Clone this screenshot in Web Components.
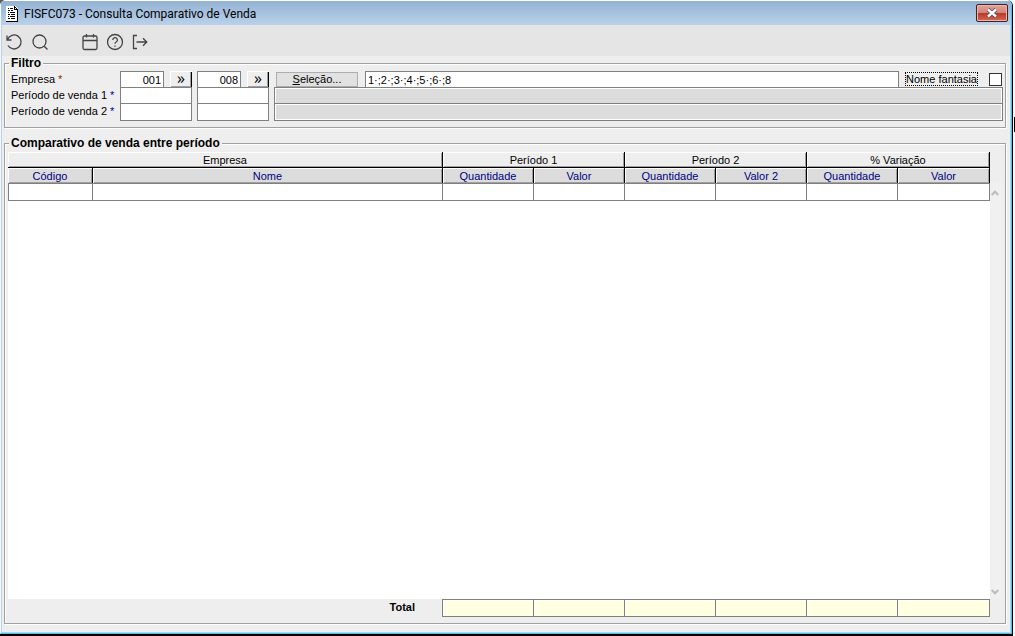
<!DOCTYPE html>
<html lang="pt-BR">
<head>
<meta charset="utf-8">
<title>FISFC073 - Consulta Comparativo de Venda</title>
<style>
html, body { margin: 0; height: 100%; }
body { background: #f4f8fc; font: 11px/14px "Liberation Sans", Arial, sans-serif; color: #000; }
</style>
</head>
<body>
<app-window heading="FISFC073 - Consulta Comparativo de Venda">
  <tool-bar slot="tools">
    <tool-button icon="undo" label="Desfazer"></tool-button>
    <tool-button icon="search" label="Pesquisar"></tool-button>
    <tool-button icon="calendar" label="Calendário" class="apart"></tool-button>
    <tool-button icon="help" label="Ajuda"></tool-button>
    <tool-button icon="exit" label="Sair"></tool-button>
  </tool-bar>
  <field-group heading="Filtro"><sales-filter></sales-filter></field-group>
  <field-group heading="Comparativo de venda entre período" class="grow"><sales-grid></sales-grid></field-group>
</app-window>

<template id="window-tpl">
<style>
:host { display: block; box-sizing: border-box; min-height: 100vh; padding-right: 2px; background: linear-gradient(#5a5a5a, #5a5a5a) 0 0 / 8px 8px no-repeat, linear-gradient(#000, #000) right 117px / 1px 15px no-repeat, #f4f8fc; }
.frame { box-sizing: border-box; min-height: 100vh; display: flex; flex-direction: column; border-right: 1px solid #000; border-bottom: 2px solid #000; border-radius: 6px 6px 0 0; overflow: hidden; background: #eee; }
.inner { flex: 1; display: flex; flex-direction: column; border-left: 1px solid #f4f8fc; border-right: 1px solid #3fc8ee; border-bottom: 1px solid #3fc8ee; }
.body { flex: 1; display: flex; flex-direction: column; border: solid #b9d1ea; border-width: 0 1px 1px; }
header { height: 25px; display: flex; align-items: center; gap: 6px; padding: 0 3px 0 5px; box-sizing: border-box; background: linear-gradient(#fff 0 1px, #94b2d0 1px, #a6c1df 50%, #b9d1ea); }
h1 { margin: 0; flex: 1; font: 12px/16px Roboto, "Open Sans", sans-serif; padding-top: 3px; }
.doc { width: 12px; height: 16px; margin-top: 2px; }
.close { width: 32px; height: 18px; padding: 0; border: 1px solid #4b1a22; border-radius: 2px; background: linear-gradient(#e3a49a, #d4857a 48%, #b93a25 52%, #cf6a55); box-shadow: inset 0 0 0 1px #e9b9b0; display: grid; place-items: center; }
main { flex: 1; display: flex; flex-direction: column; gap: 8px; padding: 0 4px 8px 2px; }
::slotted(.grow) { flex: 1; }
</style>
<div class="frame"><div class="inner">
  <header>
    <svg class="doc" viewBox="0 0 12 16" shape-rendering="crispEdges" aria-hidden="true"><path d="M0 0h9l3 3v13H0z" fill="#fff"/><path d="M0 15h12v1H0zM11 4h1v12h-1zM8 0h1v4H8zM9 1h1v1H9zM10 2h1v1h-1zM8 3h4v1H8zM2 2h1v1H2zM4 2h3v1H4zM2 4h2v1H2zM5 4h2v1H5zM2 6h1v1H2zM4 6h5v1H4zM2 8h2v1H2zM5 8h4v1H5zM2 10h1v1H2zM4 10h5v1H4zM2 12h2v1H2zM5 12h4v1H5z"/></svg>
    <h1></h1>
    <button class="close" aria-label="Fechar"><svg width="14" height="10" viewBox="0 0 14 10"><path d="M3 1.500l8 7M11 1.500l-8 7" stroke="#5a4650" stroke-width="4.200"/><path d="M3 1.500l8 7M11 1.500l-8 7" stroke="#fff" stroke-width="2.400"/></svg></button>
  </header>
  <div class="body"><slot name="tools"></slot><main><slot></slot></main></div>
</div></div>
</template>

<template id="group-tpl">
<style>
:host { display: flex; flex-direction: column; }
.box { flex: 1; display: flex; flex-direction: column; margin-top: 7px; padding: 0 2px 6px 3px; border: 1px solid #a0a0a0; box-shadow: inset 1px 1px #fff, 1px 1px #fff; }
.title { align-self: flex-start; margin: -8px 0 1px 1px; padding: 0 2px; background: #eee; font-size: 12px; font-weight: bold; line-height: 14px; }
::slotted(*) { flex: 1; }
</style>
<div class="box" role="group" aria-labelledby="t"><div class="title" id="t"></div><slot></slot></div>
</template>

<template id="filter-tpl">
<style>
:host { display: block; }
* { box-sizing: border-box; }
.grid { display: grid; grid-template-columns: 107px 72px 72px minmax(0, 1fr); grid-auto-rows: 16px; column-gap: 5px; padding-bottom: 2px; }
.name { padding-left: 3px; line-height: 16px; white-space: nowrap; }
i { font-style: normal; color: #0000a0; }
i.must { color: #803000; }
input { font: inherit; color: inherit; margin: 0; border-radius: 0; outline: 0; }
input:not([type=checkbox]) { width: 100%; height: 18px; border: 1px solid #808080; background: #fff; padding: 0 2px; }
input.off { background: #dcdcdc !important; box-shadow: inset 1px 1px #fff, inset -1px -1px #fff; }
.code { display: flex; justify-content: space-between; }
.code input { width: 44px !important; text-align: right; }
.code button { width: 22px; height: 16px; padding: 0 0 3px; border: 0; background: #eee; box-shadow: inset 1px 1px #fff, inset -1px 0 #000, inset -2px -1px #a0a0a0; font: 16px/12px "Open Sans", sans-serif; color: #000; }
.pick { display: flex; align-items: flex-start; padding: 0 1px 0 2px; }
.pick > button { width: 82px; height: 15px; margin: 1px 7px 0 0; padding: 0; border: 1px solid #adadad; background: #e1e1e1; font: inherit; line-height: 13px; color: #000; }
.pick input.list { flex: 1; width: auto; min-width: 0; }
.pick label { margin: 1px 11px 0 6px; height: 14px; line-height: 12px; border: 1px dotted #000; white-space: nowrap; }
input[type=checkbox] { appearance: none; width: 13px; height: 13px; margin-top: 2px; border: 1px solid #333; background: #fff; }
input[type=checkbox]:checked { background: #333; }
</style>
<div class="grid">
  <label class="name" for="e1">Empresa <i class="must">*</i></label>
  <div class="code"><input id="e1" value="001"><button aria-label="Buscar empresa inicial">»</button></div>
  <div class="code"><input aria-label="Empresa final" value="008"><button aria-label="Buscar empresa final">»</button></div>
  <div class="pick"><button><u>S</u>eleção...</button><input class="list" aria-label="Empresas selecionadas" value="1·;2·;3·;4·;5·;6·;8"><label for="nf">Nome fantasia</label><input type="checkbox" id="nf"></div>
  <label class="name" for="p1">Período de venda 1 <i>*</i></label>
  <input id="p1"><input aria-label="Fim do período 1"><input class="off" readonly aria-label="Descrição do período 1">
  <label class="name" for="p2">Período de venda 2 <i>*</i></label>
  <input id="p2"><input aria-label="Fim do período 2"><input class="off" readonly aria-label="Descrição do período 2">
</div>
</template>

<template id="grid-tpl">
<style>
:host { display: flex; flex-direction: column; padding-top: 1px; }
* { box-sizing: border-box; }
.area { flex: 1; display: flex; }
.sheet { flex: 1; background: #fff; }
table { width: 100%; table-layout: fixed; border-collapse: separate; border-spacing: 0; }
.c { width: 85px; } .v { width: 91px; } .last { width: 92px; }
th { height: 15px; padding: 0; font-weight: normal; line-height: 14px; color: #000080; background: #dcdcdc; border-right: 1px solid #000; box-shadow: inset 1px 1px #fff, inset -1px -1px #a0a0a0; }
.top th { height: 16px; color: #000; background: #eee; border-bottom: 1px solid #000; }
td { height: 18px; padding: 0; border: solid #808080; border-width: 1px 1px 1px 0; }
td:first-child { border-left-width: 1px; }
.scroll { width: 13px; margin-top: 31px; display: flex; flex-direction: column; justify-content: space-between; align-items: flex-start; padding: 7px 0 4px 1px; background: #f0f0f0; }
.scroll button { display: flex; padding: 0; border: 0; background: none; }
path { fill: none; stroke: #bcbcbc; stroke-width: 2; }
.total { display: flex; align-items: flex-start; margin-right: 13px; height: 18px; font-weight: bold; }
.total span { flex: 1; text-align: right; padding: 1px 27px 0 0; }
.total input { width: 91px; height: 18px; margin: 0; padding: 0 2px; border: 1px solid #808080; border-right: 0; border-radius: 0; background: #ffffe1; font: inherit; box-shadow: inset 1px 1px #fff; }
.total input:last-child { width: 93px; border-right: 1px solid #808080; }
</style>
<div class="area">
  <div class="sheet"><table>
    <colgroup><col class="c"><col><col class="v" span="5"><col class="last"></colgroup>
    <thead>
      <tr class="top"><th colspan="2">Empresa</th><th colspan="2">Período 1</th><th colspan="2">Período 2</th><th colspan="2">% Variação</th></tr>
      <tr><th>Código</th><th>Nome</th><th>Quantidade</th><th>Valor</th><th>Quantidade</th><th>Valor 2</th><th>Quantidade</th><th>Valor</th></tr>
    </thead>
    <tbody><tr><td></td><td></td><td></td><td></td><td></td><td></td><td></td><td></td></tr></tbody>
  </table></div>
  <div class="scroll">
    <button aria-label="Rolar para cima"><svg width="8" height="6" viewBox="0 0 8 6"><path d="M0.700 5L4 1.700L7.300 5"/></svg></button>
    <button aria-label="Rolar para baixo"><svg width="8" height="6" viewBox="0 0 8 6"><path d="M0.700 1L4 4.300L7.300 1"/></svg></button>
  </div>
</div>
<div class="total"><span>Total</span></div>
</template>

<script>
class BaseElement extends HTMLElement {
  stamp(id) {
    const root = this.attachShadow({ mode: 'open' });
    root.append(document.getElementById(id).content.cloneNode(true));
    return root;
  }
}
class AppWindow extends BaseElement {
  constructor() { super(); this.stamp('window-tpl').querySelector('h1').textContent = this.getAttribute('heading'); }
}
class FieldGroup extends BaseElement {
  constructor() { super(); this.stamp('group-tpl').querySelector('.title').textContent = this.getAttribute('heading'); }
}
class SalesFilter extends BaseElement {
  constructor() { super(); this.stamp('filter-tpl'); }
}
class SalesGrid extends BaseElement {
  constructor() {
    super();
    const total = this.stamp('grid-tpl').querySelector('.total');
    ['Quantidade 1', 'Valor 1', 'Quantidade 2', 'Valor 2', 'Variação quantidade', 'Variação valor'].forEach(name => {
      const box = document.createElement('input');
      box.readOnly = true;
      box.setAttribute('aria-label', 'Total ' + name);
      total.append(box);
    });
  }
}
class ToolBar extends HTMLElement {
  constructor() {
    super();
    this.attachShadow({ mode: 'open' }).innerHTML = `<style>
      :host { display: flex; align-items: center; height: 31px; gap: 7px; padding: 2px 4px 0; box-sizing: border-box; background: #e5e5e5; }
      ::slotted(.apart) { margin-left: 25px; }
    </style><slot></slot>`;
  }
}
const icons = {
  undo: '<path d="M1 2.500v4.500H5.500M1.500 6.500A7 7 0 1 1 2 12.500"/>',
  search: '<circle cx="8.500" cy="8.500" r="6.500"/><path d="M13.200 13.200l3.300 3.300"/>',
  calendar: '<rect x="2" y="3" width="14" height="13.500" rx="1.500"/><path d="M2 7.500h14M5.500 1v3.500M12.500 1v3.500"/>',
  help: '<circle cx="9" cy="9" r="7.500"/><path d="M6.800 7a2.300 2.300 0 1 1 3.400 2C9.300 9.500 9 9.900 9 10.800M9 12.500v1.300"/>',
  exit: '<path d="M6 2.500H2.500v13H6M5.500 9h10.500M12 5.300L15.800 9l-3.800 3.700"/>'
};
class ToolButton extends HTMLElement {
  constructor() {
    super();
    this.attachShadow({ mode: 'open' }).innerHTML = `<style>
      :host { display: block; }
      button { display: flex; padding: 0; border: 0; background: none; }
      svg { fill: none; stroke: #444; stroke-width: 1.300; }
    </style><button aria-label="${this.getAttribute('label')}"><svg width="18" height="18" viewBox="0 0 18 18">${icons[this.getAttribute('icon')]}</svg></button>`;
  }
}
customElements.define('app-window', AppWindow);
customElements.define('field-group', FieldGroup);
customElements.define('sales-filter', SalesFilter);
customElements.define('sales-grid', SalesGrid);
customElements.define('tool-bar', ToolBar);
customElements.define('tool-button', ToolButton);
</script>
</body>
</html>
